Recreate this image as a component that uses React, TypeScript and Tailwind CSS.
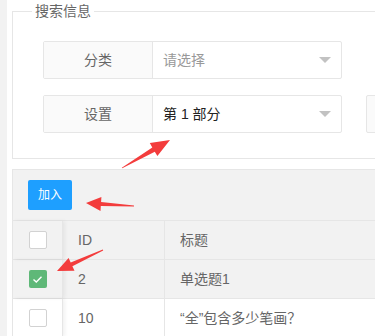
type Pt = [number, number];

function arrowPoints(t: Pt, h: Pt, headLen: number, headW: number, shaftW: number) {
  const dx = h[0] - t[0];
  const dy = h[1] - t[1];
  const len = Math.hypot(dx, dy);
  const ux = dx / len;
  const uy = dy / len;
  const nx = -uy;
  const ny = ux;
  const bx = h[0] - ux * headLen;
  const by = h[1] - uy * headLen;
  const p = (x: number, y: number) => `${x.toFixed(1)},${y.toFixed(1)}`;
  return [
    p(t[0] + nx * 0.4, t[1] + ny * 0.4),
    p(bx + (nx * shaftW) / 2, by + (ny * shaftW) / 2),
    p(bx + (nx * headW) / 2, by + (ny * headW) / 2),
    p(h[0], h[1]),
    p(bx - (nx * headW) / 2, by - (ny * headW) / 2),
    p(bx - (nx * shaftW) / 2, by - (ny * shaftW) / 2),
    p(t[0] - nx * 0.4, t[1] - ny * 0.4),
  ].join(" ");
}

function Caret() {
  return (
    <span className="ml-auto mr-[10px] h-0 w-0 border-x-[6px] border-t-[6px] border-x-transparent border-t-[#c2c2c2]" />
  );
}

function SelectRow({ label, value, placeholder }: { label: string; value: string; placeholder?: boolean }) {
  return (
    <div className="flex h-[38px] w-[299px] shrink-0 rounded-[2px] border border-[#e6e6e6]">
      <div className="flex w-[109px] items-center justify-center border-r border-[#e6e6e6] bg-[#fafafa] text-[#666]">
        {label}
      </div>
      <div className={`flex flex-1 items-center pl-[10px] ${placeholder ? "text-[#999]" : "text-[#222]"}`}>
        {value}
        <Caret />
      </div>
    </div>
  );
}

function Check({ checked }: { checked?: boolean }) {
  if (checked) {
    return (
      <span className="flex h-[18px] w-[18px] items-center justify-center rounded-[2px] bg-[#5fb878]">
        <svg width="11" height="9" viewBox="0 0 11 9" fill="none">
          <path d="M1.5 4.5 L4.3 7 L9.5 1.8" stroke="white" strokeWidth="1.4" />
        </svg>
      </span>
    );
  }
  return <span className="h-[18px] w-[18px] rounded-[2px] border border-[#d2d2d2] bg-white" />;
}

function Row({ id, title, checked, header, bg }: { id: string; title: string; checked?: boolean; header?: boolean; bg: string }) {
  return (
    <div className={`flex h-[39px] border-b border-[#e6e6e6] text-[#666] ${bg}`}>
      <div className="flex w-[50px] items-center justify-center border-r border-[#e6e6e6] shadow-[2px_0_4px_rgba(0,0,0,0.06)]">
        <Check checked={checked} />
      </div>
      <div className="flex w-[102px] items-center border-r border-[#e6e6e6] px-[15px]">{id}</div>
      <div className="flex flex-1 items-center px-[15px]">{title}</div>
      {header ? null : null}
    </div>
  );
}

export default function App() {
  const arrows: [Pt, Pt, number, number, number][] = [
    [[122, 168], [170, 140], 19, 15, 5],
    [[134, 206], [86, 203], 15, 14, 4],
    [[103, 250], [57, 271], 16, 14, 4],
  ];
  return (
    <div className="relative flex h-[336px] w-[375px] overflow-hidden bg-white font-['Liberation_Sans','Noto_Sans_CJK_SC',sans-serif] text-[14px]">
      <div className="w-[7px] shrink-0 bg-[#f2f2f2]" />
      <div className="shrink-0 pl-[5px]">
        <fieldset className="mt-[1px] w-[420px] border border-[#e6e6e6] pb-[25px] pl-[19px]">
          <legend className="px-[3px] leading-[20px] text-[#666]">搜索信息</legend>
          <div className="ml-[11px] mt-[20px] flex flex-col gap-[16px]">
            <SelectRow label="分类" value="请选择" placeholder />
            <div className="flex gap-[24px]">
              <SelectRow label="设置" value="第 1 部分" />
              <div className="h-[38px] w-[120px] rounded-[2px] border border-[#e6e6e6] bg-[#fafafa]" />
            </div>
          </div>
        </fieldset>
        <div className="mt-[10px] w-[420px] border-l border-t border-[#e6e6e6]">
          <div className="h-[51px] border-b border-[#e6e6e6] bg-[#f2f2f2] px-[15px] pt-[10px]">
            <button className="h-[30px] rounded-[2px] bg-[#1e9fff] px-[10px] text-[12px] text-white">加入</button>
          </div>
          <Row id="ID" title="标题" header bg="bg-[#f2f2f2]" />
          <Row id="2" title="单选题1" checked bg="bg-[#f2f2f2]" />
          <Row id="10" title="“全”包含多少笔画？" bg="bg-white" />
        </div>
      </div>
      <svg className="pointer-events-none absolute left-0 top-0" width="375" height="336">
        {arrows.map(([t, h, hl, hw, sw], i) => (
          <polygon key={i} points={arrowPoints(t, h, hl, hw, sw)} fill="#f33c3c" />
        ))}
      </svg>
    </div>
  );
}
